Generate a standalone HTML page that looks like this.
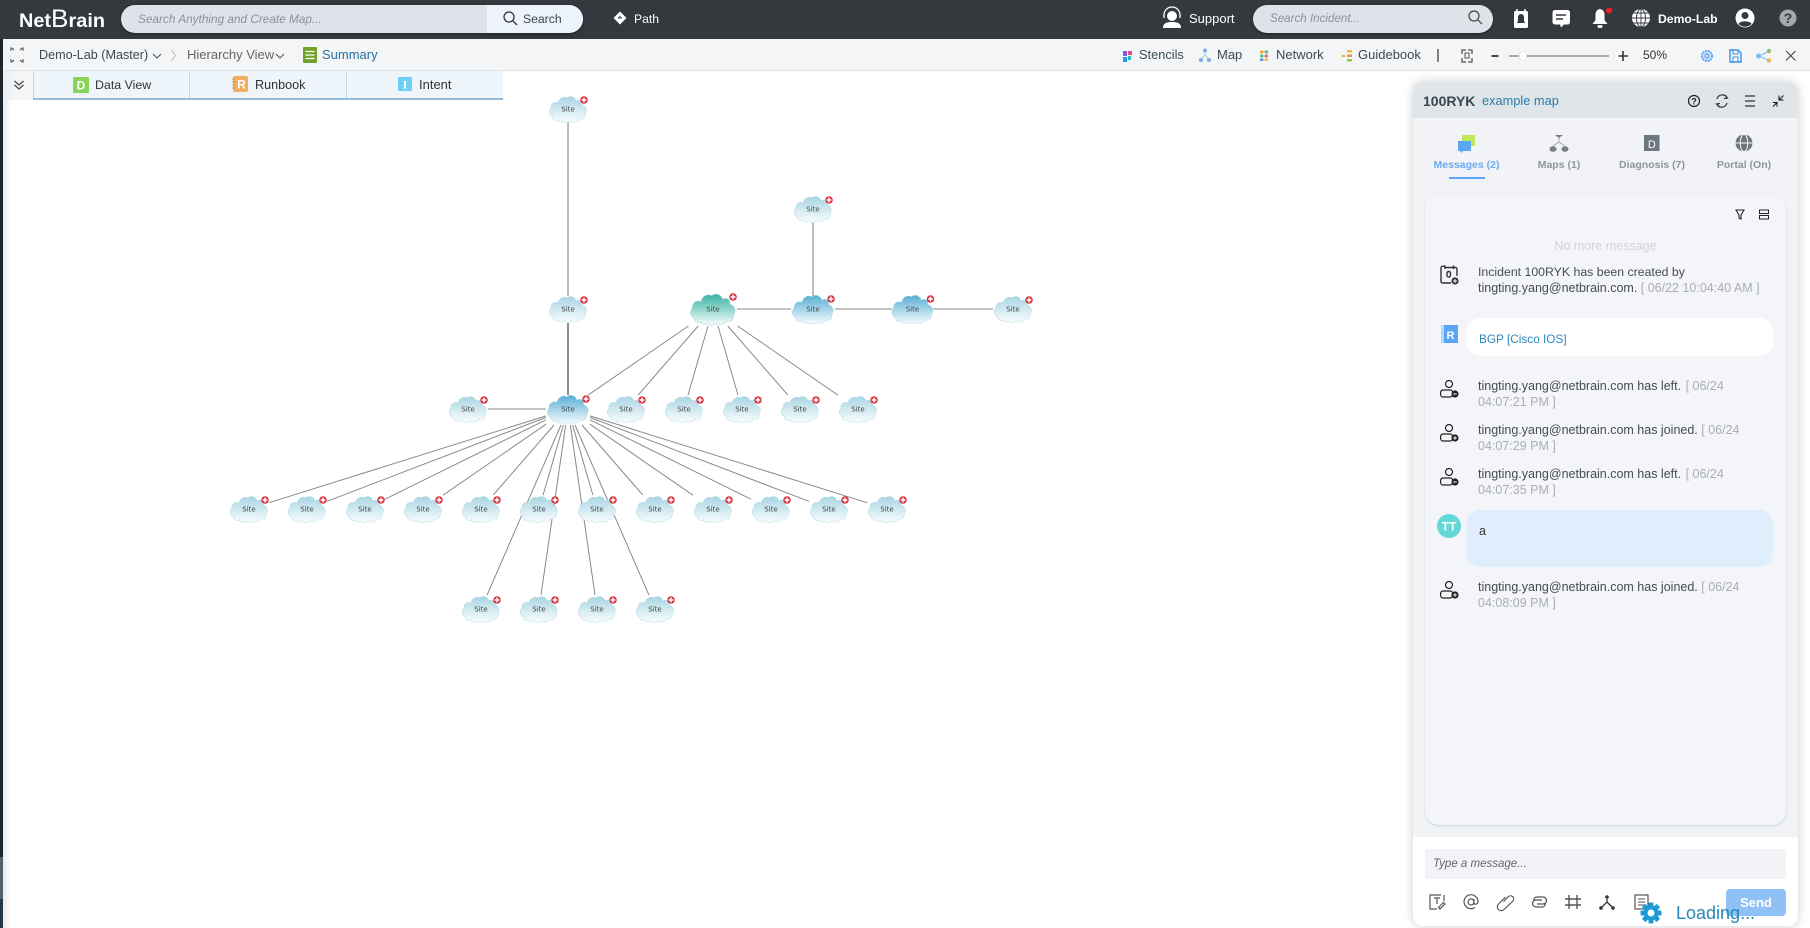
<!DOCTYPE html>
<html lang="en"><head><meta charset="utf-8"><title>NetBrain</title>
<style>
html,body{margin:0;padding:0;background:#fff}
body{width:1810px;height:928px;overflow:hidden;position:relative;font-family:"Liberation Sans",Arial,sans-serif;font-size:13px;color:#3b4a54}
.b{position:absolute}
.t{position:absolute;white-space:nowrap;line-height:16px}
.m{font-size:12.5px;color:#454c52;left:1478px}
.m i{font-style:normal;color:#a9aeb3}
svg.o{position:absolute;left:0;top:0}
.tb{font-size:10.5px;font-weight:bold;color:#8f959b;text-align:center;width:90px}
</style></head><body>

<div class="b" style="left:0;top:0;width:1810px;height:39px;background:#34393e"></div>
<div class="b" style="left:121px;top:5px;width:462px;height:28px;border-radius:14px;background:#dde3e9;overflow:hidden;box-shadow:0 1px 3px rgba(0,0,0,.4)"><div class="b" style="left:366px;top:0;width:96px;height:28px;background:#edf3fc"></div></div>
<div class="b" style="left:1253px;top:5px;width:240px;height:28px;border-radius:14px;background:#dde3e9;box-shadow:0 1px 2px rgba(0,0,0,.4)"></div>

<div class="b" style="left:3px;top:39px;width:1807px;height:31px;background:#f3f5f7;border-bottom:1px solid #dfe3e6"></div>
<div class="b" style="left:3px;top:71px;width:30px;height:29px;background:linear-gradient(90deg,#eceef0,#f3f5f7 40%)"></div>
<div class="b" style="left:33px;top:71px;width:470px;height:27px;background:#eef5fb;border-bottom:2px solid #94bbd9"></div>
<div class="b" style="left:189px;top:71px;width:1px;height:27px;background:#c5d6e3"></div>
<div class="b" style="left:346px;top:71px;width:1px;height:27px;background:#c5d6e3"></div>
<div class="b" style="left:33px;top:71px;width:1px;height:27px;background:#c5d6e3"></div>
<div class="b" style="left:3px;top:100px;width:9px;height:828px;background:linear-gradient(90deg,#e9ebed,#fff)"></div>
<div class="b" style="left:0;top:39px;width:3px;height:818px;background:#1c262c"></div>
<div class="b" style="left:0;top:857px;width:3px;height:42px;background:#50626c"></div>
<div class="b" style="left:0;top:899px;width:3px;height:29px;background:#22384a"></div>

<div class="b" style="left:1413px;top:82px;width:385px;height:844px;border-radius:10px;background:#fff;overflow:hidden;box-shadow:0 0 10px rgba(0,0,0,.2)">
 <div class="b" style="left:0;top:0;width:385px;height:36px;background:#e0e5ea"></div>
 <div class="b" style="left:0;top:36px;width:385px;height:719px;background:#f1f3f6"></div>
</div>
<div class="b" style="left:1425px;top:194px;width:361px;height:631px;border-radius:14px;background:#f4f5f8;box-shadow:0 1px 2px rgba(110,140,180,.3)"></div>
<div class="b" style="left:1466px;top:318px;width:307px;height:38px;border-radius:14px;background:#fff"></div>
<div class="b" style="left:1466px;top:510px;width:307px;height:57px;border-radius:14px;background:#e0edfd"></div>
<div class="b" style="left:1425px;top:849px;width:361px;height:30px;border-radius:3px;background:#f1f3f6"></div>
<div class="b" style="left:1726px;top:889px;width:60px;height:27px;border-radius:4px;background:#8fc1f7"></div>

<svg class="o" width="1810" height="928" viewBox="0 0 1810 928" xmlns="http://www.w3.org/2000/svg">
<defs>
<linearGradient id="gl" x1="0" y1="0" x2="0" y2="1"><stop offset="0" stop-color="#a9d5e3"/><stop offset="1" stop-color="#fafdfe"/></linearGradient>
<linearGradient id="gb" x1="0" y1="0" x2="0" y2="1"><stop offset="0" stop-color="#56aed5"/><stop offset="1" stop-color="#f8fcfd"/></linearGradient>
<linearGradient id="gt" x1="0" y1="0" x2="0" y2="1"><stop offset="0" stop-color="#35b2a2"/><stop offset="1" stop-color="#f7fcfb"/></linearGradient>
<path id="c" stroke="#9fd3e2" stroke-width=".6" stroke-dasharray="1.2 .7" d="M-10 11C-14 12-16 10-15 8C-19 7-20 2-17-1C-18-5-13-8-10-6C-9-11-4-13-1-11C2-14 7-12 8-8C11-10 15-8 14-4C18-3 20 2 17 5C18 9 14 11 11 10C10 13 5 14 3 12C1 14-3 14-5 12C-7 14-9 13-10 11Z"/>
<g id="r"><circle r="3.8" fill="#d9333f"/><path d="M-2.400 0H2.400M0-2.400V2.400" stroke="#fff" stroke-width="1.500"/></g>
</defs>

<!-- graph links -->
<g stroke="#bdbdbd" stroke-width="2" fill="none"><path d="M568 122V296M813 222V296"/></g>
<g stroke="#8c8c8c" stroke-width="2" fill="none"><path d="M568 323V395"/></g>
<g stroke="#8a8a8a" stroke-width="1" fill="none">
<path d="M737 309H791M835 309H892M933 309H993M488 409H546"/>
<path d="M688.4 326L588 395.2M698.2 326L638.2 395M708 326L688 395M718 326L738 395M727.8 326L787.8 395M737.6 326L838 395.2"/>
<path d="M546 415.9L269 502.7M546 417.4L327 501.3M546 419.8L385 499.2M546 424.2L443 495.2M554.1 425L493.2 495M563.4 425L543.1 495M572.6 425L592.9 495M581.9 425L642.8 495M590 424.2L693 495.2M590 419.8L751 499.2M590 417.4L809 501.3M590 415.9L867 502.7"/>
<path d="M561 425L487.1 595M565.7 425L541 595M570.3 425L595 595M575 425L648.9 595"/>
</g>

<!-- graph nodes -->
<g font-family="'DejaVu Sans',sans-serif" font-size="7" fill="#444" text-anchor="middle">
<g transform="translate(568 109)"><use href="#c" fill="url(#gl)"/><text y="2.5">Site</text><use href="#r" x="16" y="-9"/></g>
<g transform="translate(813 209)"><use href="#c" fill="url(#gl)"/><text y="2.5">Site</text><use href="#r" x="16" y="-9"/></g>
<g transform="translate(568 309)"><use href="#c" fill="url(#gl)"/><text y="2.5">Site</text><use href="#r" x="16" y="-9"/></g>
<g transform="translate(1013 309)"><use href="#c" fill="url(#gl)"/><text y="2.5">Site</text><use href="#r" x="16" y="-9"/></g>
<g transform="translate(713 309)"><use href="#c" fill="url(#gt)" transform="scale(1.2)"/><text y="2.5">Site</text><use href="#r" x="20" y="-12"/></g>
<g transform="translate(813 309)"><use href="#c" fill="url(#gb)" transform="scale(1.1)"/><text y="2.5">Site</text><use href="#r" x="18" y="-10"/></g>
<g transform="translate(912.5 309)"><use href="#c" fill="url(#gb)" transform="scale(1.1)"/><text y="2.5">Site</text><use href="#r" x="18" y="-10"/></g>
<g transform="translate(568 409)"><use href="#c" fill="url(#gb)" transform="scale(1.1)"/><text y="2.5">Site</text><use href="#r" x="18" y="-10"/></g>
<g transform="translate(468 409)"><use href="#c" fill="url(#gl)"/><text y="2.5">Site</text><use href="#r" x="16" y="-9"/></g>
<g transform="translate(626 409)"><use href="#c" fill="url(#gl)"/><text y="2.5">Site</text><use href="#r" x="16" y="-9"/></g>
<g transform="translate(684 409)"><use href="#c" fill="url(#gl)"/><text y="2.5">Site</text><use href="#r" x="16" y="-9"/></g>
<g transform="translate(742 409)"><use href="#c" fill="url(#gl)"/><text y="2.5">Site</text><use href="#r" x="16" y="-9"/></g>
<g transform="translate(800 409)"><use href="#c" fill="url(#gl)"/><text y="2.5">Site</text><use href="#r" x="16" y="-9"/></g>
<g transform="translate(858 409)"><use href="#c" fill="url(#gl)"/><text y="2.5">Site</text><use href="#r" x="16" y="-9"/></g>
<g transform="translate(249 509)"><use href="#c" fill="url(#gl)"/><text y="2.5">Site</text><use href="#r" x="16" y="-9"/></g>
<g transform="translate(307 509)"><use href="#c" fill="url(#gl)"/><text y="2.5">Site</text><use href="#r" x="16" y="-9"/></g>
<g transform="translate(365 509)"><use href="#c" fill="url(#gl)"/><text y="2.5">Site</text><use href="#r" x="16" y="-9"/></g>
<g transform="translate(423 509)"><use href="#c" fill="url(#gl)"/><text y="2.5">Site</text><use href="#r" x="16" y="-9"/></g>
<g transform="translate(481 509)"><use href="#c" fill="url(#gl)"/><text y="2.5">Site</text><use href="#r" x="16" y="-9"/></g>
<g transform="translate(539 509)"><use href="#c" fill="url(#gl)"/><text y="2.5">Site</text><use href="#r" x="16" y="-9"/></g>
<g transform="translate(597 509)"><use href="#c" fill="url(#gl)"/><text y="2.5">Site</text><use href="#r" x="16" y="-9"/></g>
<g transform="translate(655 509)"><use href="#c" fill="url(#gl)"/><text y="2.5">Site</text><use href="#r" x="16" y="-9"/></g>
<g transform="translate(713 509)"><use href="#c" fill="url(#gl)"/><text y="2.5">Site</text><use href="#r" x="16" y="-9"/></g>
<g transform="translate(771 509)"><use href="#c" fill="url(#gl)"/><text y="2.5">Site</text><use href="#r" x="16" y="-9"/></g>
<g transform="translate(829 509)"><use href="#c" fill="url(#gl)"/><text y="2.5">Site</text><use href="#r" x="16" y="-9"/></g>
<g transform="translate(887 509)"><use href="#c" fill="url(#gl)"/><text y="2.5">Site</text><use href="#r" x="16" y="-9"/></g>
<g transform="translate(481 609)"><use href="#c" fill="url(#gl)"/><text y="2.5">Site</text><use href="#r" x="16" y="-9"/></g>
<g transform="translate(539 609)"><use href="#c" fill="url(#gl)"/><text y="2.5">Site</text><use href="#r" x="16" y="-9"/></g>
<g transform="translate(597 609)"><use href="#c" fill="url(#gl)"/><text y="2.5">Site</text><use href="#r" x="16" y="-9"/></g>
<g transform="translate(655 609)"><use href="#c" fill="url(#gl)"/><text y="2.5">Site</text><use href="#r" x="16" y="-9"/></g>
</g>

<!-- logo -->
<text x="19" y="27" font-family="'Liberation Sans',sans-serif" font-weight="bold" font-size="19" fill="#fff" textLength="86" lengthAdjust="spacingAndGlyphs">Net<tspan font-size="25" font-weight="normal">B</tspan>rain</text>

<!-- header icons -->
<g fill="none" stroke="#333" stroke-width="1.3"><circle cx="509" cy="17" r="5"/><path d="M513 21L517 25"/></g>
<path d="M620 11.5L626.5 18L620 24.5L613.500 18Z" fill="#fff"/><path d="M618 18.500L620 16.500V18H622" stroke="#34393e" fill="none"/>
<g fill="#fff"><circle cx="1172" cy="16" r="5"/><path d="M1163 28C1163 23 1167 22 1172 22S1181 23 1181 28Z"/></g>
<path d="M1164 18V15A8 8 0 0 1 1180 15V18" fill="none" stroke="#fff" stroke-width="1.3"/>
<g fill="none" stroke="#444" stroke-width="1.2"><circle cx="1474" cy="16" r="5"/><path d="M1478 20L1482 24"/></g>
<rect x="1514" y="11" width="14" height="17" rx="1.5" fill="#fff"/><path d="M1517 9V13M1525 9V13" stroke="#fff" stroke-width="1.5"/><path d="M1521 14A3 3 0 0 0 1518 17V21L1517 23H1525L1524 21V17A3 3 0 0 0 1521 14Z" fill="#34393e"/>
<path d="M1555 10H1567A2.500 2.500 0 0 1 1570 12.500V22A2.500 2.500 0 0 1 1567 24.500H1564L1561 27.500L1560 24.500H1555A2.500 2.500 0 0 1 1552.500 22V12.500A2.500 2.500 0 0 1 1555 10Z" fill="#fff"/><path d="M1556 15H1566M1556 19H1563" stroke="#34393e" stroke-width="1.5"/>
<path d="M1600 9A5 5 0 0 1 1604.500 14V20L1607.500 24H1592.500L1595.500 20V14A5 5 0 0 1 1600 9Z" fill="#fff"/><rect x="1597.500" y="25" width="5" height="3" rx="1.500" fill="#fff"/><circle cx="1609" cy="10.500" r="3" fill="#f01e2c"/>
<circle cx="1641" cy="18" r="9" fill="#fff"/><g fill="none" stroke="#34393e" stroke-width=".9"><ellipse cx="1641" cy="18" rx="4.500" ry="9"/><path d="M1641 9V27M1632 18H1650M1633.500 13H1648.500M1633.500 23H1648.500"/></g>
<circle cx="1745" cy="18" r="9.500" fill="#fff"/><circle cx="1745" cy="15.500" r="3.500" fill="#34393e"/><path d="M1738.500 24C1739.500 20.500 1750.500 20.500 1751.500 24A9 9 0 0 1 1738.500 24Z" fill="#34393e"/>
<circle cx="1788" cy="18" r="8.500" fill="#a6a8aa"/><text x="1788" y="23" font-size="14" font-weight="bold" text-anchor="middle" fill="#34393e" font-family="'Liberation Sans',sans-serif">?</text>

<!-- toolbar icons -->
<g stroke="#444" fill="none" stroke-width="1"><path d="M12 48H11V51M22 48H23V51M12 62H11V59M22 62H23V59M14 50L12 48M20 50L22 48M14 60L12 62M20 60L22 62"/></g>
<path d="M153 54L157 58L161 54" stroke="#555" fill="none" stroke-width="1.100"/>
<path d="M171.500 50L175.500 55.500L171.500 61" stroke="#bbb" fill="none"/>
<path d="M276 54L280 58L284 54" stroke="#555" fill="none" stroke-width="1.100"/>
<rect x="303" y="47" width="14" height="16" rx="1" fill="#6fa32c"/><path d="M305.500 51.500H314.500M305.500 55H314.500M305.500 58.500H314.500" stroke="#fff" stroke-width="1.200"/>
<g><rect x="1123" y="51" width="4" height="5" fill="#7b5de0"/><rect x="1128" y="51" width="4" height="4" fill="#ec4b7c"/><rect x="1123" y="57" width="4" height="5" fill="#2b9be8"/><rect x="1128" y="56" width="3" height="4" fill="#1fb7d6"/></g>
<g fill="#7fa8de"><circle cx="1205" cy="50.500" r="2"/><circle cx="1201" cy="60" r="2"/><circle cx="1209" cy="60" r="2"/></g><path d="M1205 52V55L1201 59M1205 55L1209 59" stroke="#a8c6ec" fill="none"/>
<g><rect x="1260" y="50.500" width="3.500" height="3" rx="1" fill="#f0a63c"/><rect x="1264.500" y="50.500" width="3.500" height="3" rx="1" fill="#5cbc7a"/><rect x="1260" y="54.500" width="3.500" height="3" rx="1" fill="#5cbc7a"/><rect x="1264.500" y="54.500" width="3.500" height="3" rx="1" fill="#e0706c"/><rect x="1260" y="58.500" width="3.500" height="2.500" rx="1" fill="#5c8cdc"/><rect x="1264.500" y="58.500" width="3.500" height="2.500" rx="1" fill="#f0b65c"/></g>
<g><rect x="1342" y="55" width="3" height="2" fill="#f3a33c"/><rect x="1347" y="50" width="5" height="2.500" fill="#e9c23c"/><rect x="1347" y="54.500" width="5" height="2.500" fill="#f08a5c"/><rect x="1347" y="59" width="5" height="2.500" fill="#8ccb3c"/></g>
<rect x="1437" y="49" width="2" height="13" fill="#7b8084"/>
<g fill="none" stroke="#555" stroke-width="1.300"><path d="M1462 54V50H1466M1468 50H1472V54M1472 58V62H1468M1466 62H1462V58"/><rect x="1465" y="53" width="4" height="5" stroke-width="1"/></g>
<rect x="1491.500" y="55" width="7" height="2" fill="#444"/>
<rect x="1509" y="55" width="100" height="2" fill="#a9adb1"/><circle cx="1523" cy="56" r="4.500" fill="#000" opacity=".12"/><circle cx="1523" cy="56" r="3.900" fill="#fff"/>
<path d="M1618.500 56H1628M1623 51V61" stroke="#333" stroke-width="1.600"/>
<circle cx="1707" cy="56" r="5.200" fill="#c4def8" stroke="#5aa0ea" stroke-width="1.600" stroke-dasharray="2 .8"/><circle cx="1707" cy="56" r="2" fill="none" stroke="#5aa0ea"/>
<path d="M1730 50H1738L1741 53V62H1730Z" fill="none" stroke="#3d8fe0" stroke-width="1.400"/><path d="M1733 50V54H1738V50M1733 62V57H1738V62" fill="none" stroke="#3d8fe0"/>
<circle cx="1769" cy="51" r="2.200" fill="#8cc06c"/><circle cx="1758.500" cy="56" r="2.400" fill="#7cbcec"/><circle cx="1769" cy="60.500" r="2.200" fill="#e8b84c"/><path d="M1768 51.500L1759 56L1768 60" stroke="#7cbcec" fill="none"/>
<path d="M1786 51L1795.500 60.500M1795.500 51L1786 60.500" stroke="#444" stroke-width="1.100"/>

<!-- data tab icons -->
<path d="M14.500 81L19 85L23.500 81M14.500 85L19 89L23.500 85" fill="none" stroke="#444" stroke-width="1.200"/>
<rect x="73" y="77" width="16" height="16" rx="1" fill="#89d35a"/><text x="81" y="89.500" text-anchor="middle" font-family="'Liberation Sans',sans-serif" font-size="12" font-weight="bold" fill="#fff">D</text>
<rect x="233" y="76" width="15" height="16" rx="2" fill="#f2ae5f"/><path d="M232 79H235M232 82H235M232 85H235M232 88H235" stroke="#c98a3c" stroke-width=".8"/><text x="241.500" y="88.500" text-anchor="middle" font-family="'Liberation Sans',sans-serif" font-size="12" font-weight="bold" fill="#fff">R</text>
<rect x="398" y="77" width="14" height="14" fill="#6ed0f8"/><text x="405" y="88.500" text-anchor="middle" font-family="'Liberation Serif',serif" font-size="12" font-weight="bold" fill="#fff">I</text>

<!-- panel header icons -->
<circle cx="1694" cy="101" r="5.500" fill="none" stroke="#222" stroke-width="1.200"/><text x="1694" y="104.500" text-anchor="middle" font-family="'Liberation Sans',sans-serif" font-size="9" font-weight="bold" fill="#222">?</text>
<path d="M1717 99A5.500 5.500 0 0 1 1727 97.500M1727 103A5.500 5.500 0 0 1 1717 104.500M1725 95L1727.500 98L1724 98.500M1719 107L1716.500 104L1720 103.500" fill="none" stroke="#333" stroke-width="1.200"/>
<path d="M1745 96H1755M1745 101H1755M1745 106H1755" stroke="#333" stroke-width="1.200"/>
<path d="M1773 106.500L1777 102.500M1773 102.500H1777V106.500M1783.500 95.500L1779 100M1779 95.500V100H1783.500" fill="none" stroke="#111" stroke-width="1"/>

<!-- panel tab icons -->
<rect x="1462" y="135" width="13" height="11" fill="#bfe95a"/><path d="M1458 141H1471V151H1463L1461.500 153L1460 151H1458Z" fill="#5ca5f0"/>
<g fill="#777e84"><path d="M1555 135H1563L1559 138Z"/><ellipse cx="1553" cy="149" rx="3.500" ry="2.800"/><ellipse cx="1565" cy="149" rx="3.500" ry="2.800"/></g><path d="M1559 138V142L1553 146M1559 142L1565 146" stroke="#9aa0a5" fill="none" stroke-width=".8"/>
<rect x="1644" y="135" width="15.500" height="16" fill="#6c777f"/><text x="1651.800" y="148" text-anchor="middle" font-family="'Liberation Sans',sans-serif" font-size="11" fill="#fff">D</text>
<circle cx="1744" cy="143" r="8.500" fill="#6f777d"/><g fill="none" stroke="#f1f3f6" stroke-width="1"><ellipse cx="1744" cy="143" rx="3.800" ry="8.500"/><path d="M1735.500 143H1752.500"/></g>

<!-- filter / list -->
<path d="M1736 210H1744L1741 215V219L1739 218V215Z" fill="none" stroke="#222" stroke-width="1.100"/>
<rect x="1759.500" y="210" width="9" height="3.500" fill="none" stroke="#222"/><rect x="1759.500" y="215.500" width="9" height="3.500" fill="none" stroke="#222"/>

<!-- message icons -->
<g fill="none" stroke="#333" stroke-width="1.400"><path d="M1445 267.500H1456A1.500 1.500 0 0 1 1457 269V276M1451 283H1442.500A1.500 1.500 0 0 1 1441 281.500V269A1.500 1.500 0 0 1 1445 267.500M1445 265.500V269M1453.500 265.500V269"/><rect x="1447" y="271.500" width="3.500" height="5.500" rx="1.700"/></g><circle cx="1455" cy="281" r="3.600" fill="#333"/><path d="M1453 281H1457M1455 279V283" stroke="#fff"/>
<rect x="1441" y="325" width="17" height="18" fill="#5aa5f5"/><rect x="1441" y="325" width="3" height="18" fill="#b6d6fa"/><text x="1450.500" y="339" text-anchor="middle" font-family="'Liberation Sans',sans-serif" font-size="11" font-weight="bold" fill="#fff">R</text>

<g fill="none" stroke="#222" stroke-width="1.200"><circle cx="1449" cy="384" r="3.500"/><rect x="1440.600" y="390" width="12" height="7" rx="2.500"/></g><circle cx="1455" cy="394" r="3.600" fill="#222"/><path d="M1453.200 394H1456.800" stroke="#fff"/>
<g fill="none" stroke="#222" stroke-width="1.200"><circle cx="1449" cy="428" r="3.500"/><rect x="1440.600" y="434" width="12" height="7" rx="2.500"/></g><circle cx="1455" cy="438" r="3.600" fill="#222"/><path d="M1453.200 438H1456.800M1455 436.200V439.800" stroke="#fff"/>
<g fill="none" stroke="#222" stroke-width="1.200"><circle cx="1449" cy="472" r="3.500"/><rect x="1440.600" y="478" width="12" height="7" rx="2.500"/></g><circle cx="1455" cy="482" r="3.600" fill="#222"/><path d="M1453.200 482H1456.800" stroke="#fff"/>
<circle cx="1449" cy="526" r="12" fill="#63d8d8"/><text x="1449" y="530.500" text-anchor="middle" font-family="'Liberation Sans',sans-serif" font-size="12" font-weight="bold" fill="#fff">TT</text>
<g fill="none" stroke="#222" stroke-width="1.200"><circle cx="1449" cy="585" r="3.500"/><rect x="1440.600" y="591" width="12" height="7" rx="2.500"/></g><circle cx="1455" cy="595" r="3.600" fill="#222"/><path d="M1453.200 595H1456.800M1455 593.200V596.800" stroke="#fff"/>

<!-- composer icons -->
<g fill="none" stroke="#555" stroke-width="1.200">
<path d="M1441 895H1430V909H1437M1444 895V901"/><path d="M1434 898H1440M1437 898V904M1440 909L1445 904L1443.500 902.500L1438.500 907.500Z"/>
<circle cx="1471" cy="902" r="3"/><path d="M1474 899V904Q1478 905 1478 901A7 7 0 1 0 1475 907.500"/>
<path d="M1503.500 901.500L1508.500 896.500A3.200 3.200 0 0 1 1513 901L1504 909.500A3.500 3.500 0 0 1 1498.500 904L1505.500 897"/>
<path d="M1534 901A3 3 0 0 1 1537 897H1543A3.500 3.500 0 0 1 1543 904H1537M1545 903A3 3 0 0 1 1542 907H1536A3.500 3.500 0 0 1 1536 900H1542"/>
<path d="M1569 895V909M1577 895V909M1565 899H1581M1565 905H1581" stroke-width="1.400"/>
<path d="M1607 899V902L1601 908M1607 902L1613 908" stroke="#333" stroke-width="1.300"/>
<rect x="1635" y="895" width="13" height="14"/><path d="M1638 899H1645M1638 902H1645M1638 905H1645" stroke-width="1"/>
</g>
<g fill="#333"><circle cx="1607" cy="897" r="1.800"/><circle cx="1601" cy="908" r="1.800"/><circle cx="1613" cy="908" r="1.800"/></g>

<!-- loading gear -->
<g transform="translate(1651 913)"><g fill="#1c9ad6"><rect x="-2.500" y="-10.500" width="5" height="21" rx="1"/><rect x="-2.500" y="-10.500" width="5" height="21" rx="1" transform="rotate(45)"/><rect x="-2.500" y="-10.500" width="5" height="21" rx="1" transform="rotate(90)"/><rect x="-2.500" y="-10.500" width="5" height="21" rx="1" transform="rotate(135)"/><circle r="7.500"/></g><circle r="3.500" fill="#fff"/></g>
</svg>

<!-- header text -->
<div class="t" style="left:138px;top:11px;font-style:italic;color:#8a939a;font-size:11.8px">Search Anything and Create Map...</div>
<div class="t" style="left:523px;top:11px;color:#3b444b;font-size:12.2px">Search</div>
<div class="t" style="left:634px;top:11px;color:#fff;font-size:12.2px">Path</div>
<div class="t" style="left:1189px;top:11px;color:#fff;font-size:13px">Support</div>
<div class="t" style="left:1270px;top:11px;font-style:italic;color:#8a939a;font-size:11.6px">Search Incident...</div>
<div class="t" style="left:1658px;top:11px;color:#fff;font-size:12.2px;font-weight:bold">Demo-Lab</div>

<!-- toolbar text -->
<div class="t" style="left:39px;top:47px;font-size:12.6px">Demo-Lab (Master)</div>
<div class="t" style="left:187px;top:47px;color:#666">Hierarchy View</div>
<div class="t" style="left:322px;top:47px;color:#2a6f9f">Summary</div>
<div class="t" style="left:1139px;top:47px;font-size:12.8px">Stencils</div>
<div class="t" style="left:1217px;top:47px">Map</div>
<div class="t" style="left:1276px;top:47px">Network</div>
<div class="t" style="left:1358px;top:47px">Guidebook</div>
<div class="t" style="left:1643px;top:47px;font-size:12px;color:#333">50%</div>

<!-- tab text -->
<div class="t" style="left:95px;top:77px;color:#333;font-size:12.4px">Data View</div>
<div class="t" style="left:255px;top:77px;color:#333;font-size:12.6px">Runbook</div>
<div class="t" style="left:419px;top:77px;color:#333">Intent</div>

<!-- panel -->
<div class="t" style="left:1423px;top:93px;font-size:14px;font-weight:bold;color:#3a444c">100RYK</div>
<div class="t" style="left:1482px;top:93px;color:#2b7ba8;font-size:12.8px">example map</div>
<div class="t tb" style="left:1421.500px;top:157px;color:#6cabf2">Messages (2)</div>
<div class="t tb" style="left:1514px;top:157px">Maps (1)</div>
<div class="t tb" style="left:1607px;top:157px">Diagnosis (7)</div>
<div class="t tb" style="left:1699px;top:157px">Portal (On)</div>
<div class="b" style="left:1449px;top:177px;width:36px;height:2px;background:#5aa5f5"></div>

<div class="t" style="left:1425px;width:361px;text-align:center;top:238px;color:#d0d3d6;font-size:12.5px">No more message</div>
<div class="t m" style="top:264px;font-size:12.3px">Incident 100RYK has been created by</div>
<div class="t m" style="top:280px">tingting.yang@netbrain.com. <i>[ 06/22 10:04:40 AM ]</i></div>
<div class="t" style="left:1479px;top:331px;color:#2e86c1;font-size:11.800px">BGP [Cisco IOS]</div>
<div class="t m" style="top:378px">tingting.yang@netbrain.com has left. <i style="margin-left:1px">[ 06/24</i></div>
<div class="t m" style="top:394px"><i>04:07:21 PM ]</i></div>
<div class="t m" style="top:422px">tingting.yang@netbrain.com has joined. <i>[ 06/24</i></div>
<div class="t m" style="top:438px"><i>04:07:29 PM ]</i></div>
<div class="t m" style="top:466px">tingting.yang@netbrain.com has left. <i style="margin-left:1px">[ 06/24</i></div>
<div class="t m" style="top:482px"><i>04:07:35 PM ]</i></div>
<div class="t" style="left:1479px;top:523px;color:#333;font-size:12.5px">a</div>
<div class="t m" style="top:579px">tingting.yang@netbrain.com has joined. <i>[ 06/24</i></div>
<div class="t m" style="top:595px"><i>04:08:09 PM ]</i></div>

<div class="t" style="left:1433px;top:856px;font-style:italic;color:#666;font-size:11.500px">Type a message...</div>
<div class="t" style="left:1726px;width:60px;text-align:center;top:895px;color:#fff;font-weight:bold;font-size:13px">Send</div>
<div class="t" style="left:1676px;top:902px;line-height:22px;font-size:18px;color:#2a86b8">Loading...</div>
</body></html>
